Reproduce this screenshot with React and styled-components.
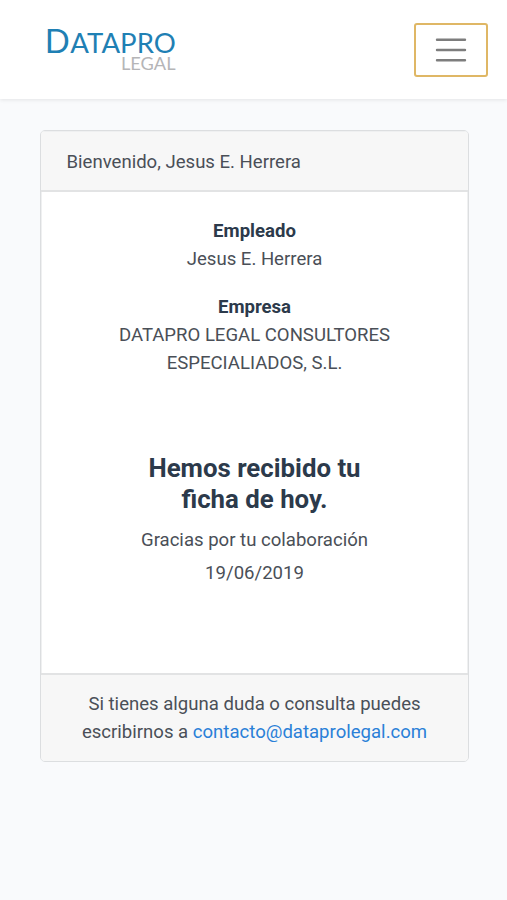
import React from "react";
import styled, { createGlobalStyle } from "styled-components";

const GlobalStyle = createGlobalStyle`
  *, *::before, *::after { box-sizing: border-box; }
  body {
    margin: 0;
    background: #f9fafc;
    color: #4a4f57;
    font-family: Roboto, "Liberation Sans", sans-serif;
    font-size: 18.57px;
    line-height: 27.6px;
  }
`;

const Navbar = styled.header`
  display: flex;
  align-items: center;
  justify-content: space-between;
  height: 99px;
  padding: 0 19px 0 40px;
  background: #fff;
  box-shadow: 0 1px 4px rgba(0, 0, 0, 0.09);
`;

const Logo = styled.svg`
  display: block;
  font-family: Lato, sans-serif;
`;

const Toggler = styled.button`
  display: flex;
  align-items: center;
  justify-content: center;
  width: 74px;
  height: 54px;
  padding: 0;
  border: 2px solid #dfb765;
  border-radius: 3px;
  background: #fff;
`;

const Main = styled.main`
  padding: 31px 38px 0 40px;
`;

const Card = styled.section`
  display: flex;
  flex-direction: column;
  height: 632px;
  border: 1px solid #dcdee0;
  border-radius: 5px;
  background: #fff;
  box-shadow: inset 0 0 0 1px #eff0f1;
  overflow: hidden;
`;

const CardHeader = styled.div`
  height: 61px;
  padding: 17px 25.5px 0;
  border-bottom: 2px solid #e2e3e4;
  background: #f7f7f7;
  box-shadow: inset 0 1px 0 #eff0f1;
  line-height: 28px;
`;

const CardBody = styled.div`
  flex: 1;
  padding: 26.2px 62px 0;
  text-align: center;
`;

const Detail = styled.dl`
  margin: 0 0 21px;
`;

const Term = styled.dt`
  color: #2c3a4b;
  font-weight: 700;
`;

const Value = styled.dd`
  margin: 0;
`;

const Notice = styled.div`
  margin-top: 76px;
`;

const Title = styled.h1`
  margin: 0 0 12.2px;
  color: #2c3a4b;
  font-size: 25.8px;
  font-weight: 700;
  line-height: 31px;
`;

const Line = styled.p`
  margin: 0 0 5px;
`;

const CardFooter = styled.footer`
  height: 88px;
  padding: 16px 25px 0;
  border-top: 2px solid #e2e3e4;
  background: #f7f7f7;
  text-align: center;
`;

const Link = styled.a`
  color: #2a80d8;
  text-decoration: none;
`;

export default function App() {
  return (
    <>
      <GlobalStyle />
      <Navbar>
        <Logo width="145" height="99" aria-label="Datapro Legal">
          <text x="4.8" y="52.7" fontSize="33" fill="#1f80b4" textLength="25" lengthAdjust="spacingAndGlyphs">D</text>
          <text x="30.3" y="52.7" fontSize="26" fill="#1f80b4" textLength="105.5" lengthAdjust="spacingAndGlyphs">ATAPRO</text>
          <text x="81" y="69.5" fontSize="16.5" fill="#b5b5b7" textLength="54.5" lengthAdjust="spacingAndGlyphs">LEGAL</text>
        </Logo>
        <Toggler aria-label="Menu">
          <svg width="32" height="26" stroke="#7d7d7d" strokeWidth="2.4" strokeLinecap="round">
            <path d="M2 2.7H30M2 13H30M2 23.3H30" />
          </svg>
        </Toggler>
      </Navbar>
      <Main>
        <Card>
          <CardHeader>Bienvenido, Jesus E. Herrera</CardHeader>
          <CardBody>
            <Detail>
              <Term>Empleado</Term>
              <Value>Jesus E. Herrera</Value>
            </Detail>
            <Detail>
              <Term>Empresa</Term>
              <Value>DATAPRO LEGAL CONSULTORES ESPECIALIADOS, S.L.</Value>
            </Detail>
            <Notice>
              <Title>Hemos recibido tu<br />ficha de hoy.</Title>
              <Line>Gracias por tu colaboración</Line>
              <Line>19/06/2019</Line>
            </Notice>
          </CardBody>
          <CardFooter>
            Si tienes alguna duda o consulta puedes<br />
            escribirnos a <Link href="mailto:contacto@dataprolegal.com">contacto@dataprolegal.com</Link>
          </CardFooter>
        </Card>
      </Main>
    </>
  );
}
